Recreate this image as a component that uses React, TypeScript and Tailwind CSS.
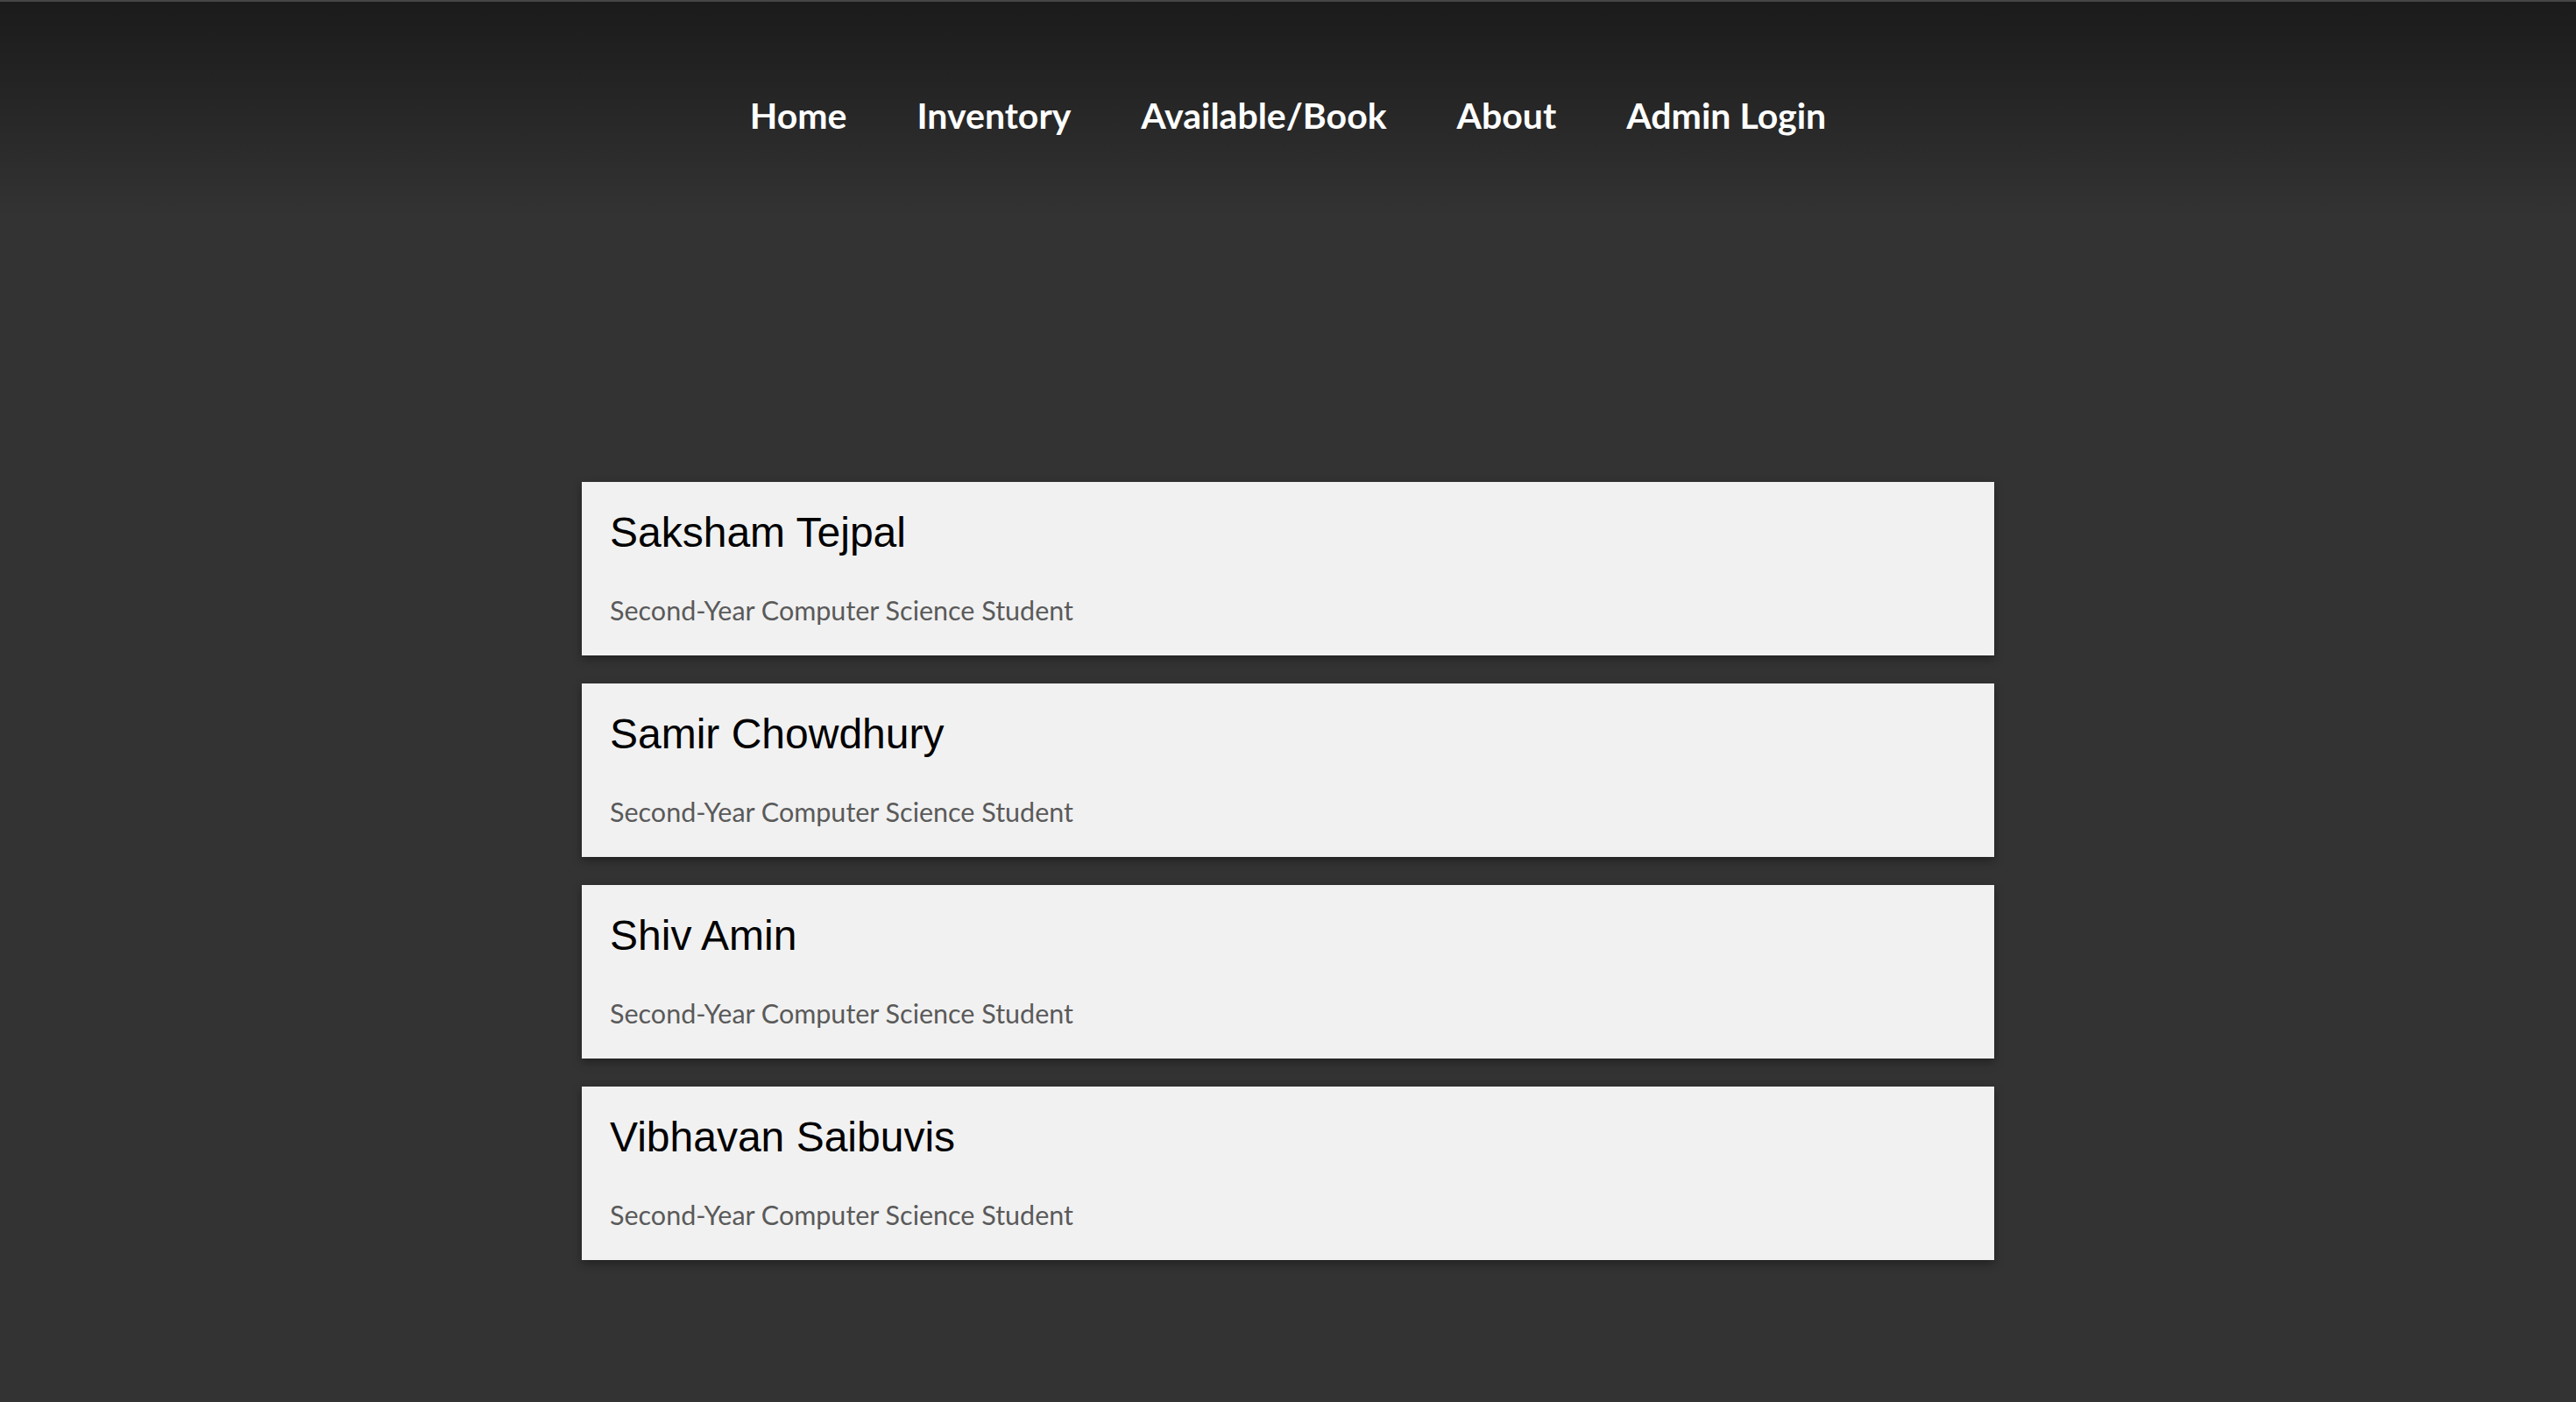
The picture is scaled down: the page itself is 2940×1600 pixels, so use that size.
const links = ["Home", "Inventory", "Available/Book", "About", "Admin Login"];

const team = [
  { name: "Saksham Tejpal", role: "Second-Year Computer Science Student" },
  { name: "Samir Chowdhury", role: "Second-Year Computer Science Student" },
  { name: "Shiv Amin", role: "Second-Year Computer Science Student" },
  { name: "Vibhavan Saibuvis", role: "Second-Year Computer Science Student" },
];

function NavBar() {
  return (
    <div className="h-[248px] bg-gradient-to-b from-[#1b1b1b] to-[#333333] border-t-2 border-[#464646]">
      <nav className="flex justify-center gap-[80px] pt-[106px]">
        {links.map((l) => (
          <a
            key={l}
            href="#"
            className="text-white font-bold text-[41px] leading-[48px] font-['Lato',sans-serif]"
          >
            {l}
          </a>
        ))}
      </nav>
    </div>
  );
}

function MemberCard({ name, role }: { name: string; role: string }) {
  return (
    <div className="h-[198px] bg-[#f1f1f1] px-[32px] pt-[30px] shadow-[0_4px_10px_rgba(0,0,0,0.35)]">
      <h2 className="text-black text-[48px] leading-[56px] font-['Liberation_Sans',Arial,sans-serif]">
        {name}
      </h2>
      <p className="mt-[42px] text-[#5a5a5a] text-[30.5px] leading-[36px] font-['Lato',sans-serif]">
        {role}
      </p>
    </div>
  );
}

export default function App() {
  return (
    <div className="min-h-screen bg-[#333333]">
      <NavBar />
      <div className="w-[1612px] mx-auto mt-[302px] flex flex-col gap-[32px] pb-[160px]">
        {team.map((m) => (
          <MemberCard key={m.name} name={m.name} role={m.role} />
        ))}
      </div>
    </div>
  );
}
